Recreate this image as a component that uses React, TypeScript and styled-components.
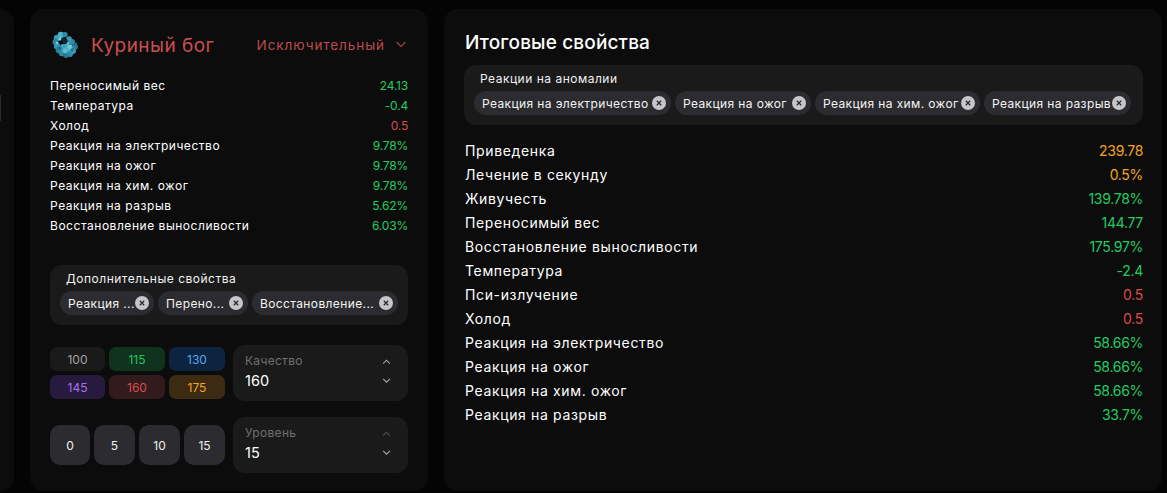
import React from "react";
import styled, { createGlobalStyle } from "styled-components";

const Global = createGlobalStyle`
  html, body { margin: 0; padding: 0; background: #040404; height: 100%; overflow: hidden; }
  * { box-sizing: border-box; }
  body { font-family: "Inter", "Liberation Sans", sans-serif; color: #fff; }
`;

const Page = styled.div`
  width: 1167px; height: 493px; padding: 9px 5px 2px 0;
  display: grid; grid-template-columns: 14px 398px 1fr; column-gap: 16px;
  overflow: hidden;
`;
const Panel = styled.section`
  background: #0c0c0d; border-radius: 14px; min-width: 0;
`;
const Stub = styled(Panel)`
  border-radius: 0 14px 14px 0; position: relative;
  &::before { content: ""; position: absolute; left: 0; top: 86px; width: 1px; height: 26px; background: #2a2a2c; }
`;
const ItemPanel = styled(Panel)`
  padding: 20px 20px 0;
  display: flex; flex-direction: column;
`;
const ItemHead = styled.header`
  display: flex; align-items: center; height: 30px; margin-bottom: 16px; padding-left: 2px;
`;
const ItemName = styled.h2`
  margin: 0 0 0 13px; padding-top: 2px; font-size: 19px; font-weight: 400; color: #c94f4f; letter-spacing: 0.45px; flex: 1; white-space: nowrap;
`;
const Rarity = styled.div`
  display: flex; align-items: center; gap: 10px; padding: 2px 1px 0 0; color: #bd4b4b; font-size: 13.5px; letter-spacing: 0.93px; white-space: nowrap;
`;
const StatList = styled.div`
  display: flex; flex-direction: column;
`;
const SummaryList = styled(StatList)`
  padding-left: 1px;
`;
const StatRow = styled.div<{ $h: number; $size: number; $sp: number }>`
  display: flex; justify-content: space-between; align-items: center;
  height: ${p => p.$h}px; font-size: ${p => p.$size}px; letter-spacing: ${p => p.$sp}px; white-space: nowrap;
`;
const StatValue = styled.span<{ $c: string; $sp: number }>`
  color: ${p => p.$c}; letter-spacing: ${p => p.$sp}px;
`;
const TagBox = styled.div`
  background: #1a1a1b; border-radius: 12px; padding: 6px 10px 10px;
  height: 60px;
`;
const TagTitle = styled.div`
  font-size: 12px; letter-spacing: 0.5px; padding-left: 6px; height: 16px; line-height: 16px; margin-bottom: 4px; color: #f1f1f1; white-space: nowrap;
`;
const TagRow = styled.div`
  display: flex; gap: 4px;
`;
const Tag = styled.div<{ $w: number }>`
  height: 24px; border-radius: 12px; background: #2c2c30; display: flex; align-items: center; justify-content: space-between;
  padding: 0 5px 0 8px; font-size: 12px; letter-spacing: 0.38px; color: #f4f4f4; white-space: nowrap; min-width: 0; flex: none;
  width: ${p => p.$w}px;
`;
const TagClose = styled.span`
  width: 14px; height: 14px; border-radius: 50%; background: #c6c6c8; display: inline-flex; align-items: center; justify-content: center; flex: none;
`;
const Spacer = styled.div<{ $h: number }>`
  height: ${p => p.$h}px; flex: none;
`;
const ControlRow = styled.div`
  display: grid; grid-template-columns: 175px 175px; column-gap: 8px; align-items: center;
`;
const QualityGrid = styled.div`
  display: grid; grid-template-columns: 55px 56px 56px; grid-auto-rows: 24px; gap: 4px 4px;
`;
const Quality = styled.div<{ $bg: string; $c: string }>`
  background: ${p => p.$bg}; color: ${p => p.$c}; border-radius: 7px; font-size: 12px;
  display: flex; align-items: center; justify-content: center;
`;
const LevelRow = styled.div`
  display: grid; grid-template-columns: 40px 41px 41px 41px; column-gap: 4px;
`;
const Level = styled.div`
  height: 40px; border-radius: 10px; background: #2c2c30; color: #f1f1f1; font-size: 12px; display: flex; align-items: center; justify-content: center;
`;
const Stepper = styled.div`
  height: 56px; background: #1a1a1b; border-radius: 12px; padding: 7px 17px 0 12px; display: flex; justify-content: space-between;
`;
const StepText = styled.div`
  display: flex; flex-direction: column;
`;
const StepLabel = styled.div`
  font-size: 12px; letter-spacing: 0.3px; color: #6f6f72; height: 18px; line-height: 18px;
`;
const StepValue = styled.div`
  font-size: 14.5px; color: #fff; height: 22px; line-height: 22px;
`;
const Arrows = styled.div`
  display: flex; flex-direction: column; justify-content: flex-start; gap: 14px; padding-top: 7px;
`;
const SummaryPanel = styled(Panel)`
  padding: 20px 19px 0 20px;
`;
const SummaryTitle = styled.h2`
  margin: 0; padding-left: 1px; height: 28px; line-height: 28px; font-size: 19px; font-weight: 500; letter-spacing: 0.15px; color: #fff;
`;
const SummaryBox = styled(TagBox)`
  margin-top: 8px;
`;

const Chevron = ({ up, color, size = 12 }: { up?: boolean; color: string; size?: number }) => (
  <svg width={size} height={size * 0.6} viewBox="0 0 12 7" fill="none" stroke={color} strokeWidth="1.4">
    <path d={up ? "M1.5 6 6 1.5 10.5 6" : "M1.5 1 6 5.5 10.5 1"} />
  </svg>
);

const CloseIcon = () => (
  <TagClose>
    <svg width="6" height="6" viewBox="0 0 6 6" stroke="#2c2c30" strokeWidth="1.3">
      <path d="M.8.8l4.4 4.4M5.2.8.8 5.2" />
    </svg>
  </TagClose>
);

const blobDots: [number, number, number, string][] = [
  [5, 7, 3.2, "#3a9bb5"], [9, 4, 3.2, "#4fb0c8"], [13, 3.5, 2.6, "#2f8aa5"], [3.5, 11, 3, "#2c85a0"],
  [5, 15, 3.2, "#3597b2"], [7, 19, 3.4, "#2a7f9c"], [10, 22, 3.2, "#2f8aa5"], [14, 24, 3, "#25738f"],
  [18, 23, 3, "#2f8aa5"], [21, 20, 3, "#3a9bb5"], [23, 16, 2.8, "#2a7f9c"], [20, 11, 3, "#2f8aa5"],
  [17, 8, 2.8, "#3a9bb5"], [15, 17, 4.4, "#48aac2"], [11, 16, 3, "#3fa3bc"], [18, 16, 2.6, "#6cc6d6"],
  [13, 20, 2.4, "#5fbccd"], [8, 8, 1.6, "#7fd2de"], [5, 12, 1.3, "#74c8d6"], [20, 19, 1.4, "#1f6a85"],
  [8, 17, 1.5, "#1d6480"], [24, 13, 1.4, "#1f6a85"], [16, 12, 1.5, "#65bfd1"],
];

const Blob = () => (
  <svg width="26" height="27" viewBox="0 0 26 27">
    {blobDots.map(([x, y, r, c], i) => <circle key={i} cx={x} cy={y} r={r} fill={c} />)}
    <ellipse cx="12.5" cy="9.5" rx="3.4" ry="2.6" fill="#0c2732" transform="rotate(35 12.5 9.5)" />
  </svg>
);

const G = "#22cc62", R = "#dc4a4a", O = "#f5a524";
const itemStats: [string, string, string][] = [
  ["Переносимый вес", "24.13", G],
  ["Температура", "-0.4", G],
  ["Холод", "0.5", R],
  ["Реакция на электричество", "9.78%", G],
  ["Реакция на ожог", "9.78%", G],
  ["Реакция на хим. ожог", "9.78%", G],
  ["Реакция на разрыв", "5.62%", G],
  ["Восстановление выносливости", "6.03%", G],
];
const totalStats: [string, string, string][] = [
  ["Приведенка", "239.78", O],
  ["Лечение в секунду", "0.5%", O],
  ["Живучесть", "139.78%", G],
  ["Переносимый вес", "144.77", G],
  ["Восстановление выносливости", "175.97%", G],
  ["Температура", "-2.4", G],
  ["Пси-излучение", "0.5", R],
  ["Холод", "0.5", R],
  ["Реакция на электричество", "58.66%", G],
  ["Реакция на ожог", "58.66%", G],
  ["Реакция на хим. ожог", "58.66%", G],
  ["Реакция на разрыв", "33.7%", G],
];
const qualities: [string, string, string][] = [
  ["100", "#1a1a1b", "#a3a3a6"],
  ["115", "#10331f", "#22c55e"],
  ["130", "#0c2440", "#5aa5f0"],
  ["145", "#281a3f", "#a874e8"],
  ["160", "#331a1c", "#d94f4f"],
  ["175", "#3d2a12", "#f5a524"],
];

export default function App() {
  return (
    <Page>
      <Global />
      <Stub />
      <ItemPanel>
        <ItemHead>
          <Blob />
          <ItemName>Куриный бог</ItemName>
          <Rarity>
            Исключительный
            <Chevron color="#8a3c3c" />
          </Rarity>
        </ItemHead>
        <StatList>
          {itemStats.map(([n, v, c]) => (
            <StatRow key={n} $h={20} $size={12} $sp={0.53}>
              <span>{n}</span>
              <StatValue $c={c} $sp={-0.2}>{v}</StatValue>
            </StatRow>
          ))}
        </StatList>
        <Spacer $h={30} />
        <TagBox>
          <TagTitle>Дополнительные свойства</TagTitle>
          <TagRow>
            <Tag $w={94}>Реакция ...<CloseIcon /></Tag>
            <Tag $w={90}>Перено...<CloseIcon /></Tag>
            <Tag $w={146}>Восстановление...<CloseIcon /></Tag>
          </TagRow>
        </TagBox>
        <Spacer $h={20} />
        <ControlRow>
          <QualityGrid>
            {qualities.map(([v, bg, c]) => (
              <Quality key={v} $bg={bg} $c={c}>{v}</Quality>
            ))}
          </QualityGrid>
          <Stepper>
            <StepText>
              <StepLabel>Качество</StepLabel>
              <StepValue>160</StepValue>
            </StepText>
            <Arrows>
              <Chevron up color="#a8a8aa" size={9} />
              <Chevron color="#a8a8aa" size={9} />
            </Arrows>
          </Stepper>
        </ControlRow>
        <Spacer $h={16} />
        <ControlRow>
          <LevelRow>
            {["0", "5", "10", "15"].map(v => <Level key={v}>{v}</Level>)}
          </LevelRow>
          <Stepper>
            <StepText>
              <StepLabel>Уровень</StepLabel>
              <StepValue>15</StepValue>
            </StepText>
            <Arrows>
              <Chevron up color="#525254" size={9} />
              <Chevron color="#a8a8aa" size={9} />
            </Arrows>
          </Stepper>
        </ControlRow>
      </ItemPanel>
      <SummaryPanel>
        <SummaryTitle>Итоговые свойства</SummaryTitle>
        <SummaryBox>
          <TagTitle>Реакции на аномалии</TagTitle>
          <TagRow>
            <Tag $w={197}>Реакция на электричество<CloseIcon /></Tag>
            <Tag $w={136}>Реакция на ожог<CloseIcon /></Tag>
            <Tag $w={165}>Реакция на хим. ожог<CloseIcon /></Tag>
            <Tag $w={147}>Реакция на разрыв<CloseIcon /></Tag>
          </TagRow>
        </SummaryBox>
        <Spacer $h={13} />
        <SummaryList>
          {totalStats.map(([n, v, c]) => (
            <StatRow key={n} $h={24} $size={14} $sp={0.64}>
              <span>{n}</span>
              <StatValue $c={c} $sp={-0.3}>{v}</StatValue>
            </StatRow>
          ))}
        </SummaryList>
      </SummaryPanel>
    </Page>
  );
}
